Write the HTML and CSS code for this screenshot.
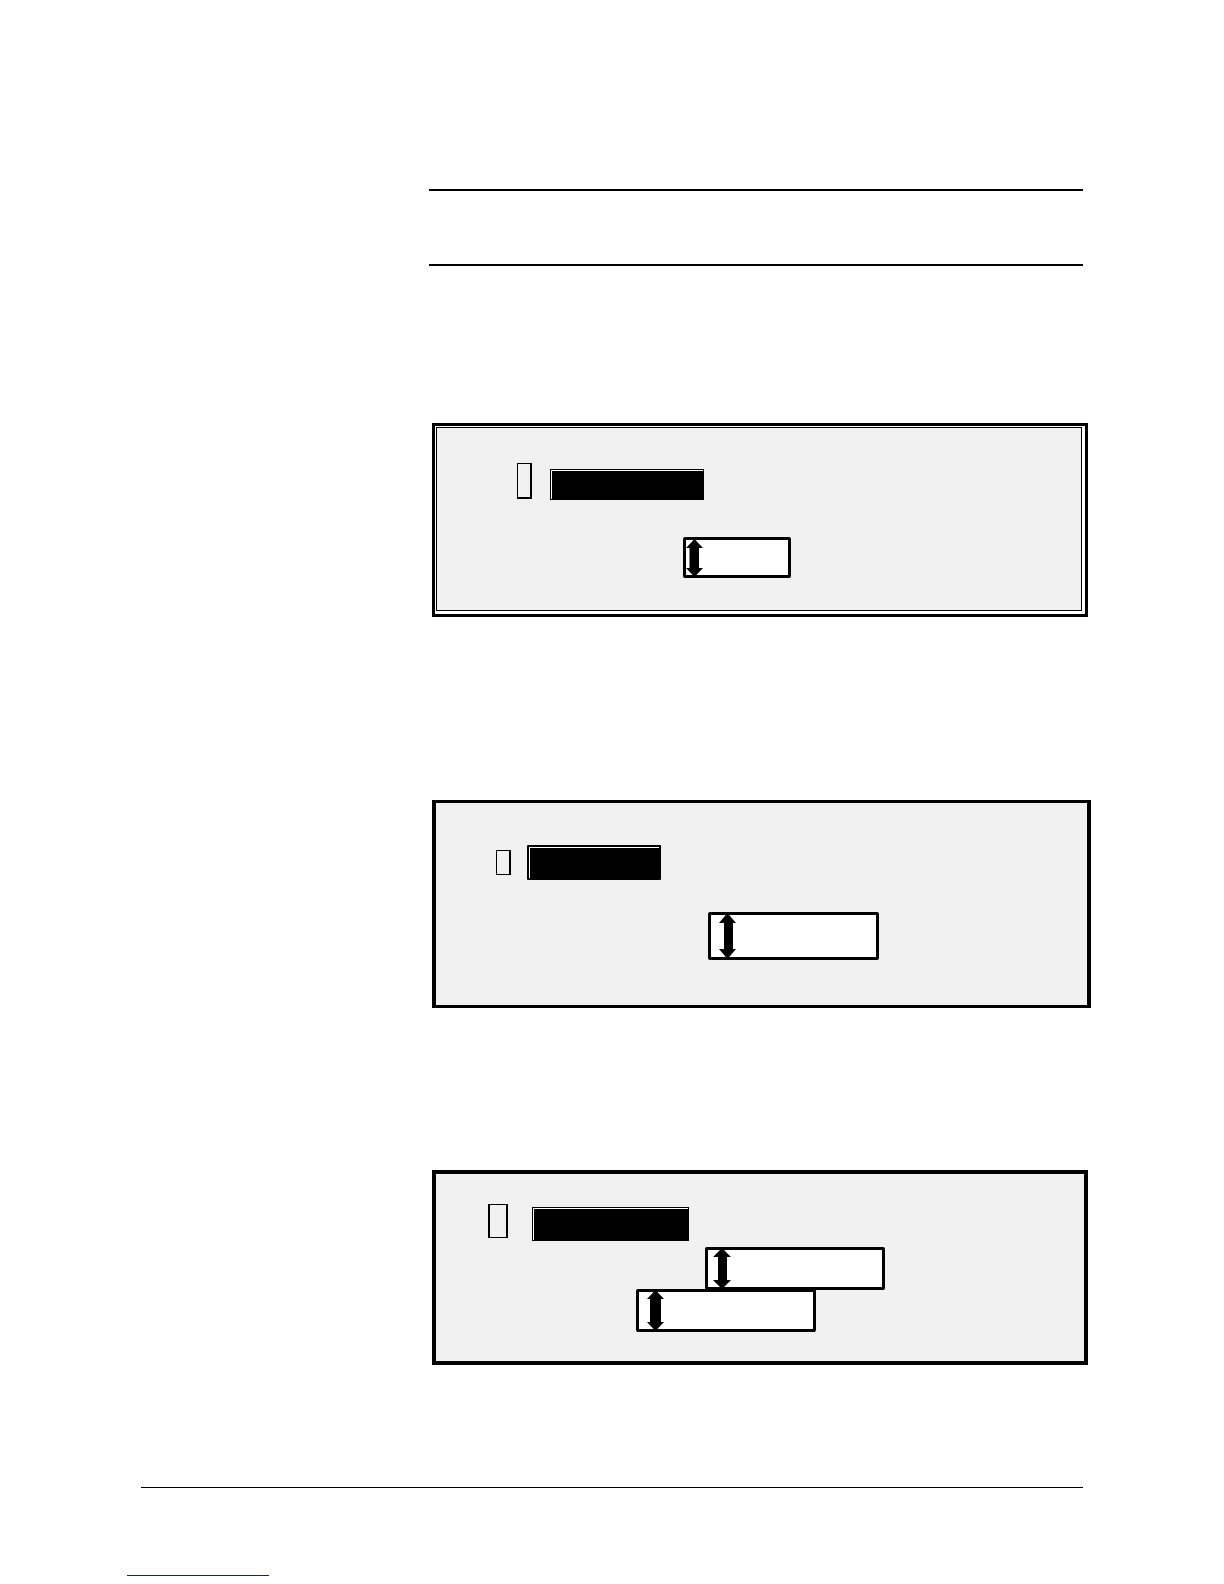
FILE: index.html
```html
<!DOCTYPE html>
<html lang="en">
<head>
	<meta charset="UTF-8">
	<meta name="viewport" content="width=device-width, initial-scale=1.0">
	<title>Manual Page</title>
	<link rel="stylesheet" href="styles.css">
</head>
<body>
	<main class="content">
		<header class="heading"></header>

		<!-- double framed panel -->
		<section class="panel panel-double">
			<div class="panel-inner">
				<div class="row">
					<input type="checkbox" class="check" aria-label="Enable">
					<button class="bar" type="button" aria-label="Option"></button>
				</div>
				<div class="popup">
					<select aria-label="Value"><option></option></select>
					<svg class="arrow" width="17" height="38" viewBox="0 0 17 38"><path d="M8.5 0L17 9H13V29H17L8.5 38L0 29H3.500V9H0Z"/></svg>
				</div>
			</div>
		</section>

		<section class="panel panel-wide">
			<div class="row">
				<input type="checkbox" class="check" aria-label="Enable">
				<button class="bar" type="button" aria-label="Option"></button>
			</div>
			<div class="popup">
				<select aria-label="Value"><option></option></select>
				<svg class="arrow" width="17" height="46" viewBox="0 0 17 46"><path d="M8.500 0L17 10H14V36H17L8.500 46L0 36H5V10H0Z"/></svg>
			</div>
		</section>

		<!-- two stacked popups -->
		<section class="panel panel-stacked">
			<div class="row">
				<input type="checkbox" class="check" aria-label="Enable">
				<button class="bar" type="button" aria-label="Option"></button>
			</div>
			<div class="popup">
				<select aria-label="First value"><option></option></select>
				<svg class="arrow" width="18" height="41" viewBox="0 0 18 41"><path d="M9 0L18 9H14V32H18L9 41L0 32H5V9H0Z"/></svg>
			</div>
			<div class="popup popup-second">
				<select aria-label="Second value"><option></option></select>
				<svg class="arrow" width="17" height="41" viewBox="0 0 17 41"><path d="M8.500 0L17 9H14V32H17L8.500 41L0 32H3V9H0Z"/></svg>
			</div>
		</section>
	</main>
	<footer class="footer">
		<a class="footer-link" href="#" aria-label="Back to top"></a>
	</footer>
</body>
</html>
```
FILE: styles.css
```css
* {
  box-sizing: border-box;
}
body {
  margin: 0;
  padding: 189px 141px 8px;
  background-color: white;
  font-family: "Liberation Sans", Arial, sans-serif;
}
.content {
  margin-left: 288px;
}
.heading {
  height: 77px;
  border-top: 2px solid black;
  border-bottom: 2px solid black;
}

/* panels */
.panel {
  margin-left: 3px;
  margin-right: -5px;
  border: 4px solid black;
  background-color: #f1f1f1;
}
.panel-double {
  margin-top: 157px;
  border-width: 3px;
  padding: 1px 3px 3px 1px;
  background-color: white;
}
.panel-inner {
  border: 1px solid black;
  padding: 35px 0 32px 80px;
  background-color: #f1f1f1;
}
.panel-wide {
  margin-top: 183px;
  margin-right: -8px;
  border-width: 3px 4px;
  padding: 42px 0 45px 60px;
}
.panel-stacked {
  margin-top: 162px;
  padding: 30px 0 29px 52px;
}

/* tick box and black bar */
.row {
  display: flex;
  align-items: flex-start;
  gap: 18px;
}
.check {
  appearance: none;
  margin: 0;
  width: 15px;
  height: 36px;
  border: 1px solid black;
  border-right-width: 2px;
  border-bottom-width: 2px;
  border-radius: 0;
}
.bar {
  margin: 6px 0 0;
  padding: 0;
  width: 154px;
  height: 31px;
  border: 1px solid black;
  border-radius: 0;
  background-color: black;
  box-shadow: inset 1px 1px white;
}
.panel-wide .row {
  align-items: center;
  gap: 16px;
}
.panel-wide .check {
  height: 25px;
  border-bottom-width: 1px;
}
.panel-wide .bar {
  margin: 0;
  width: 134px;
  height: 35px;
  border-width: 2px;
  border-radius: 1px;
}
.panel-stacked .row {
  gap: 24px;
}
.panel-stacked .check {
  width: 20px;
  height: 34px;
  border-width: 1px 2px;
}
.panel-stacked .bar {
  margin-top: 3px;
  width: 157px;
  height: 34px;
}

/* popups */
.popup {
  position: relative;
  width: 108px;
  height: 41px;
  margin-top: 37px;
  margin-left: 166px;
}
.popup select {
  appearance: none;
  display: block;
  width: 100%;
  height: 100%;
  margin: 0;
  padding: 0 8px 0 32px;
  border: 3px solid black;
  border-radius: 2px;
  background-color: white;
  font-size: 16px;
}
.arrow {
  position: absolute;
  top: 2px;
  left: 3px;
  pointer-events: none;
}
.panel-wide .popup {
  width: 171px;
  height: 48px;
  margin-top: 32px;
  margin-left: 212px;
}
.panel-wide .arrow {
  top: 1px;
  left: 11px;
}
.panel-stacked .popup {
  width: 180px;
  height: 43px;
  margin-top: 6px;
  margin-left: 217px;
}
.panel-stacked .arrow {
  top: 1px;
  left: 8px;
}
.panel-stacked .popup-second {
  margin-top: -1px;
  margin-left: 148px;
}
.panel-stacked .popup-second .arrow {
  left: 11px;
}

.footer {
  margin-top: 122px;
  padding-top: 87px;
  border-top: 1px solid black;
}
.footer-link {
  display: block;
  width: 142px;
  margin-left: -14px;
  border-bottom: 1px solid #1a1a8c;
}
```
